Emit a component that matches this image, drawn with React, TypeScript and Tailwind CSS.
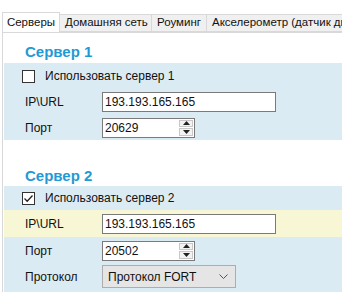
import React from "react";

const font = { fontFamily: '"Liberation Sans", Arial, sans-serif' };

function Tab({ label, active, w }: { label: string; active?: boolean; w: string }) {
  return active ? (
    <div className={`relative z-10 -mb-px flex h-[21px] shrink-0 items-center justify-center border border-b-0 border-[#d9d9d9] bg-white text-[11.5px] ${w}`}>
      {label}
    </div>
  ) : (
    <div className={`mt-[2px] flex h-[18px] shrink-0 items-center overflow-hidden whitespace-nowrap border border-l-0 border-[#d9d9d9] bg-[#f0f0f0] pl-[5px] text-[11.5px] ${w}`}>
      {label}
    </div>
  );
}

function CheckBox({ checked }: { checked?: boolean }) {
  return (
    <div className="flex h-[13px] w-[13px] items-center justify-center border border-[#333] bg-white">
      {checked && (
        <svg width="11" height="11" viewBox="0 0 11 11">
          <path d="M1.5 5.5 L4.2 8.2 L9.5 2.5" fill="none" stroke="#222" strokeWidth="1.3" />
        </svg>
      )}
    </div>
  );
}

function TextBox({ value, w }: { value: string; w: string }) {
  return (
    <div className={`flex h-[20px] items-center border border-[#7a7a7a] bg-white pl-[2px] text-[12px] ${w}`}>
      {value}
    </div>
  );
}

function Spin({ value }: { value: string }) {
  return (
    <div className="flex h-[20px] w-[93px] items-center justify-between border border-[#7a7a7a] bg-white pl-[2px] text-[12px]">
      <span>{value}</span>
      <div className="mr-px flex h-[16px] w-[14px] flex-col gap-px">
        <div className="flex flex-1 items-center justify-center border border-[#c8c8c8] bg-[#f3f3f3]">
          <svg width="7" height="4" viewBox="0 0 7 4">
            <path d="M0 4 L3.5 0 L7 4 Z" fill="#222" />
          </svg>
        </div>
        <div className="flex flex-1 items-center justify-center border border-[#c8c8c8] bg-[#f3f3f3]">
          <svg width="7" height="4" viewBox="0 0 7 4">
            <path d="M0 0 L7 0 L3.5 4 Z" fill="#222" />
          </svg>
        </div>
      </div>
    </div>
  );
}

function Row({ label, h, children, bg = "" }: { label: string; h: string; children: React.ReactNode; bg?: string }) {
  return (
    <div className={`flex items-center ${h} ${bg}`}>
      <div className="w-[98px] pl-[21px] text-[12px]">{label}</div>
      {children}
    </div>
  );
}

function Heading({ text, className }: { text: string; className: string }) {
  return (
    <div className={`flex items-end pl-[21px] text-[15px] font-bold leading-[18px] text-[#1f9ad6] ${className}`}>
      {text}
    </div>
  );
}

export default function App() {
  return (
    <div className="h-[292px] w-[342px] overflow-hidden bg-white text-[#111]" style={font}>
      <div className="flex overflow-hidden pl-[2px] pt-[12px]">
        <Tab label="Серверы" active w="w-[58px]" />
        <Tab label="Домашняя сеть" w="w-[92px]" />
        <Tab label="Роуминг" w="w-[55px]" />
        <Tab label="Акселерометр (датчик дв" w="w-[136px]" />
      </div>
      <div className="ml-[2px] h-full border-l border-t border-[#d9d9d9] pl-px">
        <Heading text="Сервер 1" className="h-[30px] pb-[2px]" />
        <div className="bg-[#dbebf4]">
          <div className="flex h-[26px] items-center pl-[18px]">
            <CheckBox />
            <span className="ml-[10px] text-[12px]">Использовать сервер 1</span>
          </div>
          <Row label="IP\URL" h="h-[26px]">
            <TextBox value="193.193.165.165" w="w-[174px]" />
          </Row>
          <Row label="Порт" h="h-[25px]">
            <Spin value="20629" />
          </Row>
        </div>
        <Heading text="Сервер 2" className="h-[46px] pb-[1px]" />
        <div className="flex h-[24px] items-center bg-[#dbebf4] pl-[18px]">
          <CheckBox checked />
          <span className="ml-[10px] text-[12px]">Использовать сервер 2</span>
        </div>
        <Row label="IP\URL" h="h-[27px]" bg="bg-[#f7f7d5]">
          <TextBox value="193.193.165.165" w="w-[174px]" />
        </Row>
        <div className="h-full bg-[#dbebf4]">
          <Row label="Порт" h="h-[27px]">
            <Spin value="20502" />
          </Row>
          <Row label="Протокол" h="h-[25px]">
            <div className="flex h-[23px] w-[134px] items-center justify-between border border-[#adadad] bg-[#e5e5e5] pl-[5px] pr-[7px] text-[12px]">
              <span>Протокол FORT</span>
              <svg width="9" height="5" viewBox="0 0 9 5">
                <path d="M0.5 0.5 L4.5 4.5 L8.5 0.5" fill="none" stroke="#555" strokeWidth="1" />
              </svg>
            </div>
          </Row>
        </div>
      </div>
    </div>
  );
}
